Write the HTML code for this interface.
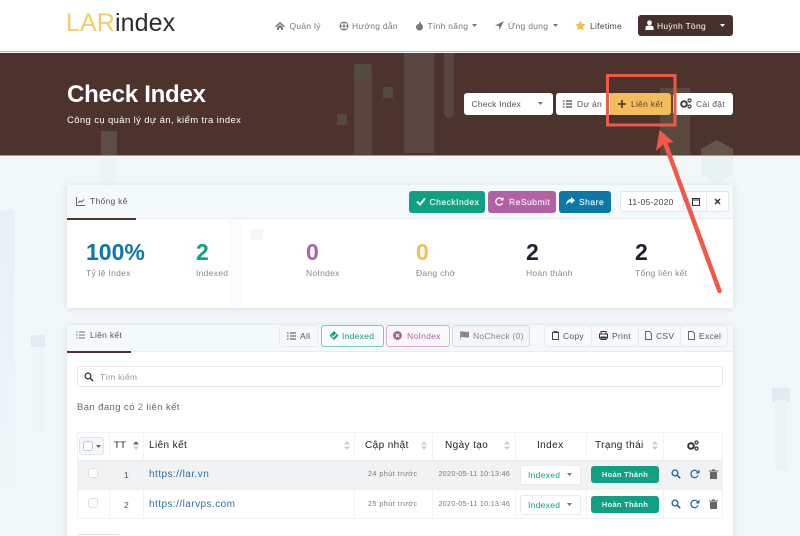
<!DOCTYPE html>
<html lang="vi">
<head>
<meta charset="utf-8">
<title>Check Index</title>
<style>
html,body{margin:0;padding:0;width:800px;height:536px;overflow:hidden;background:#f2f8f9}
#w{position:relative;width:800px;height:536px;overflow:hidden;font-family:"Liberation Sans",sans-serif;filter:blur(.35px)}
#w div,#w span.a,#w svg{position:absolute}
.t{position:absolute;white-space:nowrap;line-height:14px;letter-spacing:.28px}
.b{background:#fff;border-radius:3px;box-sizing:border-box}
.c{text-align:center}
</style>
</head>
<body>
<div id="w">
<!-- page background shapes -->
<div style="left:0;top:210px;width:15px;height:280px;background:linear-gradient(#e9f0f6,#f1f6f9)"></div>
<div style="left:31px;top:335px;width:14px;height:12px;background:#e4ecf3"></div>
<div style="left:34px;top:347px;width:10px;height:85px;background:#f0f5f8"></div>
<div style="left:772px;top:388px;width:18px;height:14px;background:#e2ecf0"></div>
<div style="left:775px;top:400px;width:12px;height:70px;background:#edf4f6"></div>
<div style="left:101px;top:156px;width:16px;height:29px;background:#eef4f7"></div>
<svg style="left:698px;top:138px" width="38" height="47" viewBox="0 0 38 47"><path d="M19 2 35 11V36L19 47 3 36V11z" fill="#e8f2f1"/></svg>

<!-- header -->
<div style="left:0;top:0;width:800px;height:52px;background:#fff;border-bottom:1px solid #c4bab8;box-sizing:border-box"></div>
<div class="t" style="left:66px;top:10px;font-size:25px;line-height:27px;letter-spacing:.1px;color:#2e2a2a"><span style="color:#f1cc6d">LAR</span>index</div>
<svg style="left:275px;top:21px" width="10" height="10" viewBox="0 0 10 10"><path d="M0 5 5 1l5 4-1 1-4-3-4 3zM2 6l3-2 3 2v3H6V7H4v2H2z" fill="#777"/></svg>
<div class="t" style="left:289.500px;top:19px;font-size:8.500px;color:#777">Quản lý</div>
<svg style="left:339px;top:21px" width="10" height="10" viewBox="0 0 10 10"><circle cx="5" cy="5" r="3.900" fill="none" stroke="#777" stroke-width="1.200"/><path d="M1 5h8M5 1v8" stroke="#777"/></svg>
<div class="t" style="left:352px;top:19px;font-size:8.500px;color:#777">Hướng dẫn</div>
<svg style="left:415px;top:20px" width="9" height="11" viewBox="0 0 9 11"><path d="M4.500 1C5 3 8 4.500 8 7a3.500 3.500 0 0 1-7 0C1 5.500 2 5 2.500 4 3 5 4 5 4.500 1z" fill="#777"/></svg>
<div class="t" style="left:427.500px;top:19px;font-size:8.500px;color:#777">Tính năng</div>
<svg style="left:472px;top:24px" width="5" height="3"><path d="M0 0h5L2.500 3z" fill="#777"/></svg>
<svg style="left:494px;top:20px" width="11" height="11" viewBox="0 0 11 11"><path d="M10 1 1 5.500l4 .5.500 4z" fill="#777"/></svg>
<div class="t" style="left:508px;top:19px;font-size:8.500px;color:#777">Ứng dụng</div>
<svg style="left:553px;top:24px" width="5" height="3"><path d="M0 0h5L2.500 3z" fill="#777"/></svg>
<svg style="left:575px;top:20px" width="11" height="11" viewBox="0 0 11 11"><path d="m5.500 .5 1.600 3.300 3.600.5-2.600 2.500.6 3.600-3.200-1.700-3.200 1.700.6-3.600L.3 4.300l3.600-.5z" fill="#f2bf55"/></svg>
<div class="t" style="left:590px;top:19px;font-size:8.500px;color:#444">Lifetime</div>
<div class="b" style="left:638px;top:15px;width:95px;height:21px;background:#46302b"></div>
<svg style="left:645px;top:20px" width="9" height="10" viewBox="0 0 9 10"><circle cx="4.500" cy="2.800" r="2.400" fill="#fff"/><path d="M.5 10V7.500C.5 6 2 5.500 4.500 5.500S8.500 6 8.500 7.500V10z" fill="#fff"/></svg>
<div class="t" style="left:657px;top:19px;font-size:8.500px;color:#fff">Huỳnh Tòng</div>
<svg style="left:720px;top:24px" width="5" height="3"><path d="M0 0h5L2.500 3z" fill="#fff"/></svg>

<!-- banner -->
<div style="left:0;top:53px;width:800px;height:103px;background:#4c332e;border-bottom:1px solid #a59a98;box-sizing:border-box;overflow:hidden">
  <div style="left:354px;top:12px;width:18px;height:91px;background:#59443d"></div>
  <div style="left:355px;top:11px;width:16px;height:15px;background:#534a40"></div>
  <div style="left:404px;top:0;width:30px;height:100px;background:#5a4640"></div>
  <div style="left:444px;top:0;width:10px;height:65px;background:#5a4641;border-radius:0 0 5px 5px"></div>
  <div style="left:337px;top:61px;width:10px;height:11px;background:#534a40"></div>
  <div style="left:383px;top:34px;width:10px;height:11px;background:#534a40"></div>
  <div style="left:101px;top:78px;width:16px;height:25px;background:#5d4c48"></div>
  <div style="left:660px;top:35px;width:30px;height:68px;background:#5a493e"></div>
  <svg style="left:698px;top:85px" width="38" height="18" viewBox="0 0 38 18"><path d="M19 2 35 11V18H3V11z" fill="#635649"/></svg>
</div>
<div class="t" style="left:67px;top:80px;font-size:24px;line-height:30px;font-weight:bold;color:#fff;letter-spacing:-.25px">Check Index</div>
<div class="t" style="left:67px;top:114px;font-size:9.500px;color:#fff;letter-spacing:.37px">Công cụ quản lý dự án, kiểm tra index</div>

<div class="b" style="left:464px;top:93px;width:89px;height:22px"></div>
<div class="t" style="left:471.500px;top:97px;font-size:8.500px;color:#555;letter-spacing:.2px">Check Index</div>
<svg style="left:538px;top:102px" width="5" height="3"><path d="M0 0h5L2.500 3z" fill="#777"/></svg>
<div class="b" style="left:556px;top:93px;width:56px;height:22px"></div>
<svg style="left:563px;top:100px" width="9" height="8" viewBox="0 0 9 8"><path d="M0 1h1.500M3 1h6M0 4h1.500M3 4h6M0 7h1.500M3 7h6" stroke="#444" stroke-width="1.200"/></svg>
<div class="t" style="left:577px;top:97px;font-size:8.500px;color:#555">Dự án</div>
<div class="b" style="left:610px;top:93px;width:61px;height:22px;background:#f3bd5c"></div>
<svg style="left:618px;top:100px" width="8" height="8"><path d="M4 0v8M0 4h8" stroke="#4c332e" stroke-width="1.600"/></svg>
<div class="t" style="left:631px;top:97px;font-size:8.500px;color:#5a4630">Liên kết</div>
<div class="b" style="left:673px;top:93px;width:60px;height:22px"></div>
<svg style="left:680px;top:98px" width="12" height="11" viewBox="0 0 12 11"><circle cx="4" cy="6" r="2.800" fill="none" stroke="#46403c" stroke-width="2"/><circle cx="9.500" cy="2.500" r="1.500" fill="none" stroke="#46403c" stroke-width="1.200"/><circle cx="9.500" cy="8.500" r="1.500" fill="none" stroke="#46403c" stroke-width="1.200"/></svg>
<div class="t" style="left:696px;top:97px;font-size:8.500px;color:#555">Cài đặt</div>

<!-- stat card -->
<div style="left:67px;top:185px;width:666px;height:123px;background:#fff;box-shadow:0 1px 6px rgba(120,130,140,.22)"></div>
<div style="left:67px;top:185px;width:666px;height:34px;background:#f4fafc;border-bottom:1px solid #e6eef1;box-sizing:border-box"></div>
<div style="left:229px;top:220px;width:12px;height:85px;background:#fafcfc"></div>
<div style="left:250px;top:229px;width:13px;height:11px;background:#f3f8f8"></div>
<div style="left:67px;top:218px;width:69px;height:2px;background:#4c332e"></div>
<svg style="left:76px;top:197px" width="9" height="9" viewBox="0 0 9 9"><path d="M.5 0v8.500H9M2 6l2-2 1.500 1L8 2.500" fill="none" stroke="#666"/></svg>
<div class="t" style="left:90px;top:194px;font-size:8.500px;color:#5a5050">Thống kê</div>

<div class="b" style="left:409px;top:191px;width:76px;height:22px;background:#10a083"></div>
<svg style="left:416px;top:197px" width="10" height="9" viewBox="0 0 10 9"><path d="m1 4.500 3 3L9 1.500" fill="none" stroke="#fff" stroke-width="1.800"/></svg>
<div class="t" style="left:429.500px;top:195px;font-size:8.500px;color:#e8f8f4;letter-spacing:.5px;-webkit-text-stroke:.2px #e8f8f4">CheckIndex</div>
<div class="b" style="left:488px;top:191px;width:68px;height:22px;background:#b361a4"></div>
<svg style="left:495px;top:197px" width="9" height="9" viewBox="0 0 9 9"><path d="M7.500 6A3.500 3.500 0 1 1 7 2.200" fill="none" stroke="#fff" stroke-width="1.300"/><path d="M8.500 0v3.500H5z" fill="#fff"/></svg>
<div class="t" style="left:509px;top:195px;font-size:8.500px;color:#f6e6f3;letter-spacing:.5px;-webkit-text-stroke:.2px #f6e6f3">ReSubmit</div>
<div class="b" style="left:559px;top:191px;width:52px;height:22px;background:#0b78a8"></div>
<svg style="left:565px;top:197px" width="10" height="9" viewBox="0 0 10 9"><path d="M6 0l4 3.500L6 7V5C3.500 5 2 6 1 8.500 1 5 3 2 6 2z" fill="#fff"/></svg>
<div class="t" style="left:579px;top:195px;font-size:8.500px;color:#e4f4fb;letter-spacing:.5px;-webkit-text-stroke:.2px #e4f4fb">Share</div>
<div class="b" style="left:620px;top:191px;width:109px;height:21px;border:1px solid #e2e8ea"></div>
<div style="left:683px;top:192px;width:1px;height:19px;background:#e8ecee"></div>
<div style="left:706px;top:192px;width:1px;height:19px;background:#e8ecee"></div>
<div class="t" style="left:628px;top:195px;font-size:8.500px;color:#444">11-05-2020</div>
<svg style="left:692px;top:197px" width="8" height="9" viewBox="0 0 8 9"><path d="M.5 1.500h7v7h-7zM.5 3h7" fill="none" stroke="#333"/></svg>
<svg style="left:714px;top:198px" width="7" height="7"><path d="m1 1 5 5M6 1 1 6" stroke="#333" stroke-width="1.500"/></svg>

<div class="t" style="left:86px;top:238px;font-size:23px;line-height:28px;font-weight:bold;color:#0b78a8;letter-spacing:0">100%</div>
<div class="t" style="left:86px;top:265.500px;font-size:8.500px;color:#888">Tỷ lệ Index</div>
<div class="t" style="left:196px;top:238px;font-size:23px;line-height:28px;font-weight:bold;color:#10a083">2</div>
<div class="t" style="left:196px;top:265.500px;font-size:8.500px;color:#888">Indexed</div>
<div class="t" style="left:306px;top:238px;font-size:23px;line-height:28px;font-weight:bold;color:#b361a4">0</div>
<div class="t" style="left:306px;top:265.500px;font-size:8.500px;color:#888">NoIndex</div>
<div class="t" style="left:416px;top:238px;font-size:23px;line-height:28px;font-weight:bold;color:#f3bd5c">0</div>
<div class="t" style="left:416px;top:265.500px;font-size:8.500px;color:#888">Đang chờ</div>
<div class="t" style="left:526px;top:238px;font-size:23px;line-height:28px;font-weight:bold;color:#1f2233">2</div>
<div class="t" style="left:526px;top:265.500px;font-size:8.500px;color:#888">Hoàn thành</div>
<div class="t" style="left:635px;top:238px;font-size:23px;line-height:28px;font-weight:bold;color:#1f2233">2</div>
<div class="t" style="left:635px;top:265.500px;font-size:8.500px;color:#888">Tổng liên kết</div>

<!-- links card -->
<div style="left:67px;top:325px;width:666px;height:215px;background:#fff;box-shadow:0 1px 6px rgba(120,130,140,.22)"></div>
<div style="left:67px;top:325px;width:666px;height:27px;background:#f4fafc;border-bottom:1px solid #e6eef1;box-sizing:border-box"></div>
<div style="left:67px;top:351px;width:64px;height:2px;background:#4c332e"></div>
<svg style="left:76px;top:331px" width="9" height="8" viewBox="0 0 9 8"><path d="M0 1h1.500M3 1h6M0 4h1.500M3 4h6M0 7h1.500M3 7h6" stroke="#777"/></svg>
<div class="t" style="left:90px;top:328px;font-size:8.500px;color:#5a5050">Liên kết</div>

<div class="b" style="left:279px;top:325px;width:39px;height:22px;background:#f7f9fa;border:1px solid #e8ecee"></div>
<svg style="left:287px;top:332px" width="9" height="8" viewBox="0 0 9 8"><path d="M0 1h1.500M3 1h6M0 4h1.500M3 4h6M0 7h1.500M3 7h6" stroke="#444"/></svg>
<div class="t" style="left:300px;top:329px;font-size:8.500px;color:#555">All</div>
<div class="b" style="left:321px;top:325px;width:63px;height:22px;background:#f7fbfa;border:1px solid #7bcbb9"></div>
<svg style="left:329px;top:331px" width="10" height="9" viewBox="0 0 10 9"><path d="M5 0 9.500 4.500 5 9 .5 4.500z" fill="#10a083"/><path d="m2.800 4.500 1.700 1.500 2.700-3" fill="none" stroke="#fff"/></svg>
<div class="t" style="left:342px;top:329px;font-size:8.500px;color:#10a083">Indexed</div>
<div class="b" style="left:386px;top:325px;width:64px;height:22px;background:#fbf8fb;border:1px solid #dcaad2"></div>
<svg style="left:393px;top:331px" width="9" height="9" viewBox="0 0 9 9"><circle cx="4.500" cy="4.500" r="4.500" fill="#b361a4"/><path d="m3 3 3 3M6 3 3 6" stroke="#fff"/></svg>
<div class="t" style="left:407px;top:329px;font-size:8.500px;color:#b361a4">NoIndex</div>
<div class="b" style="left:452px;top:325px;width:78px;height:22px;background:#f3f5f7;border:1px solid #d6dade"></div>
<svg style="left:460px;top:331px" width="9" height="9" viewBox="0 0 9 9"><path d="M.5 0v9M1 1c2-1 5 1 8 0v5C6 7 3 5 1 6z" fill="#888" stroke="#888" stroke-width=".6"/></svg>
<div class="t" style="left:473px;top:329px;font-size:8.500px;color:#888">NoCheck (0)</div>
<div class="b" style="left:544px;top:325px;width:184px;height:22px;background:#f7f9fa;border:1px solid #e8ecee"></div>
<div style="left:591px;top:326px;width:1px;height:20px;background:#e8ecee"></div>
<div style="left:638px;top:326px;width:1px;height:20px;background:#e8ecee"></div>
<div style="left:680px;top:326px;width:1px;height:20px;background:#e8ecee"></div>
<svg style="left:552px;top:331px" width="7" height="9" viewBox="0 0 7 9"><path d="M.5 1.500h6v7h-6zM2 1.500V.5h3v1" fill="none" stroke="#444"/></svg>
<div class="t" style="left:563px;top:329px;font-size:8.500px;color:#555">Copy</div>
<svg style="left:599px;top:331px" width="9" height="9" viewBox="0 0 9 9"><path d="M2 3V.5h5V3M.5 3h8v4h-8zM2 6h5v2.500H2z" fill="#fff" stroke="#333"/></svg>
<div class="t" style="left:612px;top:329px;font-size:8.500px;color:#555">Print</div>
<svg style="left:645px;top:331px" width="7" height="9" viewBox="0 0 7 9"><path d="M.5.5h4l2 2v6h-6z" fill="none" stroke="#666"/></svg>
<div class="t" style="left:656px;top:329px;font-size:8.500px;color:#555">CSV</div>
<svg style="left:688px;top:331px" width="7" height="9" viewBox="0 0 7 9"><path d="M.5.5h4l2 2v6h-6z" fill="none" stroke="#666"/></svg>
<div class="t" style="left:699px;top:329px;font-size:8.500px;color:#555">Excel</div>

<div class="b" style="left:77px;top:366px;width:646px;height:21px;border:1px solid #e4e8e9"></div>
<svg style="left:84px;top:372px" width="10" height="10" viewBox="0 0 10 10"><circle cx="4" cy="4" r="2.900" fill="none" stroke="#444" stroke-width="1.400"/><path d="m6.200 6.200 3 3" stroke="#444" stroke-width="1.600"/></svg>
<div class="t" style="left:100px;top:370px;font-size:8.500px;color:#999">Tìm kiếm</div>
<div class="t" style="left:77px;top:401px;font-size:9.500px;color:#666;letter-spacing:.4px">Bạn đang có <span style="color:#b361a4">2</span> liên kết</div>

<!-- table -->
<div style="left:77px;top:432px;width:646px;height:87px;border:1px solid #f1f3f4;box-sizing:border-box"></div>
<div style="left:78px;top:460px;width:644px;height:29px;background:#f1f2f3"></div>
<div style="left:78px;top:460px;width:644px;height:1px;background:#e9ebed"></div>
<div style="left:78px;top:489px;width:644px;height:1px;background:#f0f1f3"></div>
<div style="left:109px;top:432px;width:1px;height:87px;background:#f1f3f4"></div>
<div style="left:143px;top:432px;width:1px;height:87px;background:#f1f3f4"></div>
<div style="left:354px;top:432px;width:1px;height:87px;background:#f1f3f4"></div>
<div style="left:432px;top:432px;width:1px;height:87px;background:#f1f3f4"></div>
<div style="left:515px;top:432px;width:1px;height:87px;background:#f1f3f4"></div>
<div style="left:586px;top:432px;width:1px;height:87px;background:#f1f3f4"></div>
<div style="left:663px;top:432px;width:1px;height:87px;background:#f1f3f4"></div>

<div class="b" style="left:79px;top:437px;width:25px;height:18px;background:#f4f6f8;border:1px solid #dfe3e6"></div>
<div class="b" style="left:83px;top:441px;width:10px;height:10px;background:#fff;border:1px solid #bcc8d8"></div>
<svg style="left:96px;top:445px" width="5" height="3"><path d="M0 0h5L2.500 3z" fill="#666"/></svg>
<div class="t" style="left:114px;top:439px;font-size:9.500px;color:#222">TT</div>
<div class="t" style="left:149px;top:439px;font-size:10px;color:#222;letter-spacing:.4px">Liên kết</div>
<div class="t" style="left:365px;top:439px;font-size:10px;color:#222;letter-spacing:.4px">Cập nhật</div>
<div class="t" style="left:445px;top:439px;font-size:10px;color:#222;letter-spacing:.4px">Ngày tạo</div>
<div class="t" style="left:537px;top:439px;font-size:10px;color:#222;letter-spacing:.4px">Index</div>
<div class="t" style="left:595px;top:439px;font-size:10px;color:#222;letter-spacing:.4px">Trạng thái</div>
<svg style="left:687px;top:440px" width="12" height="11" viewBox="0 0 12 11"><circle cx="4" cy="6" r="2.800" fill="none" stroke="#333" stroke-width="2"/><circle cx="9.500" cy="2.500" r="1.500" fill="none" stroke="#333" stroke-width="1.200"/><circle cx="9.500" cy="8.500" r="1.500" fill="none" stroke="#333" stroke-width="1.200"/></svg>
<svg style="left:133px;top:441px" width="6" height="9"><path d="M0 3.500 3 0l3 3.500z" fill="#666"/><path d="M0 5.500 3 9l3-3.500z" fill="#ccc"/></svg>
<svg style="left:344px;top:441px" width="6" height="9"><path d="M0 3.500 3 0l3 3.500zM0 5.500 3 9l3-3.500z" fill="#ccc"/></svg>
<svg style="left:421px;top:441px" width="6" height="9"><path d="M0 3.500 3 0l3 3.500zM0 5.500 3 9l3-3.500z" fill="#ccc"/></svg>
<svg style="left:504px;top:441px" width="6" height="9"><path d="M0 3.500 3 0l3 3.500zM0 5.500 3 9l3-3.500z" fill="#ccc"/></svg>
<svg style="left:652px;top:441px" width="6" height="9"><path d="M0 3.500 3 0l3 3.500zM0 5.500 3 9l3-3.500z" fill="#ccc"/></svg>

<!-- row 1 -->
<div class="b" style="left:88px;top:468px;width:10px;height:10px;background:#fff;border:1px solid #dde0e3"></div>
<div class="t" style="left:124px;top:467.500px;font-size:8.500px;color:#555">1</div>
<div class="t" style="left:149px;top:467.500px;font-size:10px;color:#2f6ea5;letter-spacing:.45px">https://lar.vn</div>
<div class="t" style="left:368px;top:468px;font-size:7px;color:#777;letter-spacing:.55px">24 phút trước</div>
<div class="t" style="left:438.500px;top:468px;font-size:7px;color:#777;letter-spacing:.38px">2020-05-11 10:13:46</div>
<div class="b" style="left:520px;top:465px;width:61px;height:20px;background:#fff;border:1px solid #e8ecee"></div>
<div class="t" style="left:528px;top:468px;font-size:8.500px;color:#10a083">Indexed</div>
<svg style="left:567px;top:473px" width="5" height="3"><path d="M0 0h5L2.500 3z" fill="#777"/></svg>
<div class="b" style="left:591px;top:466px;width:68px;height:17px;background:#10a083"></div>
<div class="t c" style="left:591px;top:467.500px;width:68px;font-size:7.500px;font-weight:bold;color:#e8f8f4">Hoàn Thành</div>
<svg style="left:671px;top:469px" width="10" height="10" viewBox="0 0 10 10"><circle cx="4" cy="4" r="2.900" fill="none" stroke="#1f69ad" stroke-width="1.400"/><path d="m6.200 6.200 3 3" stroke="#1f69ad" stroke-width="1.600"/></svg>
<svg style="left:690px;top:469px" width="10" height="10" viewBox="0 0 10 10"><path d="M8 6.500A3.700 3.700 0 1 1 7.400 2.500" fill="none" stroke="#1f69ad" stroke-width="1.300"/><path d="M9.500 .5v4H5.500z" fill="#1f69ad"/></svg>
<svg style="left:709px;top:469px" width="9" height="10" viewBox="0 0 9 10"><path d="M0 1.500h9v1H0zM3 .5h3v1H3zM1 3h7v7H1z" fill="#666"/></svg>

<!-- row 2 -->
<div class="b" style="left:88px;top:498px;width:10px;height:10px;background:#fff;border:1px solid #dde0e3"></div>
<div class="t" style="left:124px;top:497.500px;font-size:8.500px;color:#555">2</div>
<div class="t" style="left:149px;top:497.500px;font-size:10px;color:#2f6ea5;letter-spacing:.45px">https://larvps.com</div>
<div class="t" style="left:368px;top:498px;font-size:7px;color:#777;letter-spacing:.55px">25 phút trước</div>
<div class="t" style="left:438.500px;top:498px;font-size:7px;color:#777;letter-spacing:.38px">2020-05-11 10:13:46</div>
<div class="b" style="left:520px;top:495px;width:61px;height:20px;background:#fff;border:1px solid #e8ecee"></div>
<div class="t" style="left:528px;top:498px;font-size:8.500px;color:#10a083">Indexed</div>
<svg style="left:567px;top:503px" width="5" height="3"><path d="M0 0h5L2.500 3z" fill="#777"/></svg>
<div class="b" style="left:591px;top:496px;width:68px;height:17px;background:#10a083"></div>
<div class="t c" style="left:591px;top:497.500px;width:68px;font-size:7.500px;font-weight:bold;color:#e8f8f4">Hoàn Thành</div>
<svg style="left:671px;top:499px" width="10" height="10" viewBox="0 0 10 10"><circle cx="4" cy="4" r="2.900" fill="none" stroke="#1f69ad" stroke-width="1.400"/><path d="m6.200 6.200 3 3" stroke="#1f69ad" stroke-width="1.600"/></svg>
<svg style="left:690px;top:499px" width="10" height="10" viewBox="0 0 10 10"><path d="M8 6.500A3.700 3.700 0 1 1 7.400 2.500" fill="none" stroke="#1f69ad" stroke-width="1.300"/><path d="M9.500 .5v4H5.500z" fill="#1f69ad"/></svg>
<svg style="left:709px;top:499px" width="9" height="10" viewBox="0 0 9 10"><path d="M0 1.500h9v1H0zM3 .5h3v1H3zM1 3h7v7H1z" fill="#666"/></svg>

<div style="left:77px;top:534px;width:44px;height:6px;border:1px solid #dfe3e6;border-radius:3px;box-sizing:border-box"></div>

<!-- annotation -->
<svg style="left:600px;top:68px" width="135" height="232" viewBox="600 68 135 232">
  <rect x="607.500" y="75.500" width="67.500" height="49.500" fill="none" stroke="#f0594a" stroke-width="3"/>
  <path d="M719.500 291 664 140" stroke="#f0594a" stroke-width="4.500" stroke-linecap="round"/>
  <path d="M659.500 130 673.500 142 663 144.500 656 151z" fill="#f0594a"/>
</svg>
</div>
</body>
</html>
